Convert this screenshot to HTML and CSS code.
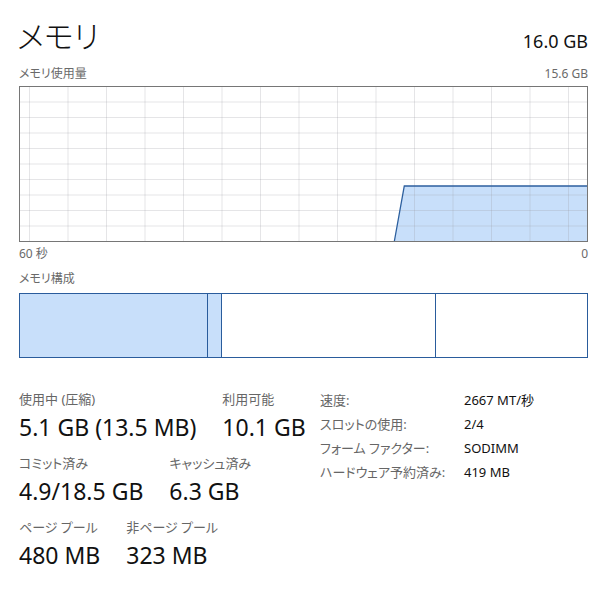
FILE: index.html
```html
<!DOCTYPE html>
<html lang="ja">
<head>
<meta charset="utf-8">
<title>メモリ</title>
<link rel="stylesheet" href="styles.css">
</head>
<body>
<div class="page">
  <div class="header">
    <div class="title">メモリ</div>
    <div class="total">16.0 GB</div>
  </div>
  <div class="caption-row top-caption">
    <span>メモリ使用量</span>
    <span>15.6 GB</span>
  </div>
  <svg class="graph" width="569" height="156" viewBox="0 0 569 156">
    <rect x="0" y="0" width="569" height="156" fill="#ffffff"/>
    <polygon points="375.3,155.5 385.3,100 568.5,100 568.5,155.5" fill="#c8dffa"/>
    <g stroke="rgba(150,150,160,0.25)" stroke-width="1">
      <line x1="10.5" y1="0" x2="10.5" y2="156"/>
      <line x1="49" y1="0" x2="49" y2="156"/>
      <line x1="87.5" y1="0" x2="87.5" y2="156"/>
      <line x1="126" y1="0" x2="126" y2="156"/>
      <line x1="164.5" y1="0" x2="164.5" y2="156"/>
      <line x1="203" y1="0" x2="203" y2="156"/>
      <line x1="241.5" y1="0" x2="241.5" y2="156"/>
      <line x1="280" y1="0" x2="280" y2="156"/>
      <line x1="318.5" y1="0" x2="318.5" y2="156"/>
      <line x1="357" y1="0" x2="357" y2="156"/>
      <line x1="395.5" y1="0" x2="395.5" y2="156"/>
      <line x1="434" y1="0" x2="434" y2="156"/>
      <line x1="472.5" y1="0" x2="472.5" y2="156"/>
      <line x1="511" y1="0" x2="511" y2="156"/>
      <line x1="549.5" y1="0" x2="549.5" y2="156"/>
      <line x1="0" y1="16" x2="569" y2="16"/>
      <line x1="0" y1="31.5" x2="569" y2="31.5"/>
      <line x1="0" y1="47" x2="569" y2="47"/>
      <line x1="0" y1="62.5" x2="569" y2="62.5"/>
      <line x1="0" y1="78" x2="569" y2="78"/>
      <line x1="0" y1="93.5" x2="569" y2="93.5"/>
      <line x1="0" y1="109" x2="569" y2="109"/>
      <line x1="0" y1="124.5" x2="569" y2="124.5"/>
      <line x1="0" y1="140" x2="569" y2="140"/>
    </g>
    <polyline points="375.3,155.5 385.3,100 568.5,100" fill="none" stroke="#2c5f9e" stroke-width="1.3"/>
    <rect x="0.5" y="0.5" width="568" height="155" fill="none" stroke="#767676" stroke-width="1"/>
  </svg>
  <div class="caption-row axis-row">
    <span>60 秒</span>
    <span>0</span>
  </div>
  <div class="caption-row comp-caption">
    <span>メモリ構成</span>
  </div>
  <div class="composition">
    <div class="seg used" style="width:188px"></div>
    <div class="seg modified" style="width:14px"></div>
    <div class="seg standby" style="width:214px"></div>
    <div class="seg free"></div>
  </div>
  <div class="stats">
    <div class="stats-left">
      <div class="stat-row row1">
        <div class="stat">
          <div class="label">使用中 (圧縮)</div>
          <div class="value">5.1 GB (13.5 MB)</div>
        </div>
        <div class="stat">
          <div class="label">利用可能</div>
          <div class="value">10.1 GB</div>
        </div>
      </div>
      <div class="stat-row row2">
        <div class="stat">
          <div class="label">コミット済み</div>
          <div class="value">4.9/18.5 GB</div>
        </div>
        <div class="stat">
          <div class="label">キャッシュ済み</div>
          <div class="value">6.3 GB</div>
        </div>
      </div>
      <div class="stat-row row3">
        <div class="stat">
          <div class="label">ページ プール</div>
          <div class="value">480 MB</div>
        </div>
        <div class="stat">
          <div class="label">非ページ プール</div>
          <div class="value">323 MB</div>
        </div>
      </div>
    </div>
    <div class="details">
      <div class="dlabel">速度:</div><div class="dvalue">2667 MT/秒</div>
      <div class="dlabel">スロットの使用:</div><div class="dvalue">2/4</div>
      <div class="dlabel">フォーム ファクター:</div><div class="dvalue">SODIMM</div>
      <div class="dlabel">ハードウェア予約済み:</div><div class="dvalue">419 MB</div>
    </div>
  </div>
</div>
</body>
</html>
```
FILE: styles.css
```css
html, body {
  margin: 0;
  padding: 0;
  background: #ffffff;
}
body {
  font-family: "Noto Sans", "Noto Sans CJK JP", sans-serif;
  font-feature-settings: "palt" 1;
  color: #1a1a1a;
}
.page {
  width: 569px;
  padding: 15px 0 0 19px;
  display: flex;
  flex-direction: column;
}
.header {
  display: flex;
  justify-content: space-between;
  align-items: baseline;
}
.title {
  font-family: "Noto Sans CJK JP", sans-serif;
  font-size: 31px;
  font-weight: 300;
  line-height: 40px;
  color: #111;
  margin-left: -2px;
}
.total {
  font-size: 18px;
  line-height: 24px;
  color: #111;
}
.caption-row {
  display: flex;
  justify-content: space-between;
  font-size: 12px;
  line-height: 16px;
  color: #6a6a6a;
}
.top-caption {
  margin-top: 11px;
  margin-bottom: 4px;
}
.graph {
  display: block;
}
.axis-row {
  margin-top: 4px;
}
.comp-caption {
  margin-top: 9px;
  margin-bottom: 6px;
}
.composition {
  display: flex;
  height: 65px;
  box-sizing: border-box;
  border: 1.5px solid #2a5c9c;
}
.seg {
  box-sizing: border-box;
  height: 100%;
  border-right: 1.5px solid #2a5c9c;
}
.seg.used, .seg.modified {
  background: #c8dffa;
}
.seg.free {
  flex: 1;
  border-right: none;
}
.stats {
  display: flex;
  margin-top: 32px;
}
.stats-left {
  width: 301px;
  display: flex;
  flex-direction: column;
  gap: 12px;
}
.stat-row {
  display: flex;
  gap: 26px;
}
.label {
  font-size: 13px;
  line-height: 18px;
  color: #666;
}
.value {
  font-size: 23px;
  line-height: 30px;
  color: #111;
  margin-top: 4px;
}
.details {
  display: grid;
  grid-template-columns: 144px auto;
  row-gap: 6px;
  font-size: 13px;
  line-height: 18px;
  align-content: start;
  margin-top: 1px;
}
.dlabel {
  color: #666;
}
.dvalue {
  color: #111;
}
```
